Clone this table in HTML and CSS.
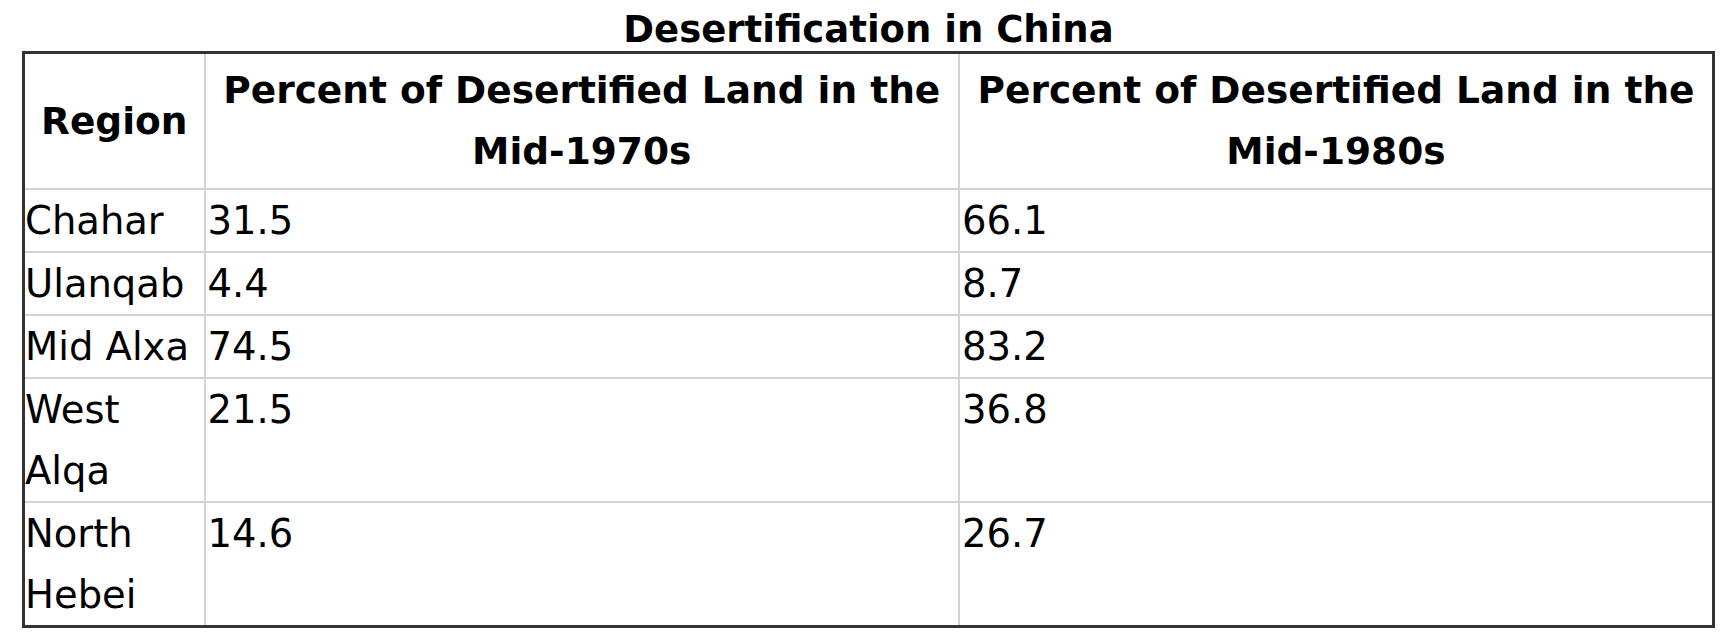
FILE: index.html
```html
<!DOCTYPE html>
<html lang="en">
<head>
<meta charset="utf-8">
<title>Desertification in China</title>
<link rel="stylesheet" href="styles.css">
</head>
<body>
<table class="data-table">
  <caption class="data-caption">Desertification in China</caption>
  <colgroup>
    <col class="col-region">
    <col class="col-value">
    <col class="col-value">
  </colgroup>
  <thead>
    <tr>
      <th>Region</th>
      <th>Percent of Desertified Land in the Mid-1970s</th>
      <th>Percent of Desertified Land in the Mid-1980s</th>
    </tr>
  </thead>
  <tbody>
    <tr><td>Chahar</td><td>31.5</td><td>66.1</td></tr>
    <tr><td>Ulanqab</td><td>4.4</td><td>8.7</td></tr>
    <tr><td>Mid Alxa</td><td>74.5</td><td>83.2</td></tr>
    <tr><td>West Alqa</td><td>21.5</td><td>36.8</td></tr>
    <tr><td>North Hebei</td><td>14.6</td><td>26.7</td></tr>
  </tbody>
</table>
</body>
</html>
```

FILE: styles.css
```css
html, body {
  background: #ffffff;
}

body {
  margin: 8px;
  color: #000000;
  font-family: "DejaVu Sans", Verdana, sans-serif;
}

.data-table {
  margin-left: 14px;
  width: 1693px;
  border-collapse: collapse;
  border: 3px solid #333333;
  table-layout: fixed;
  font-size: 38.5px;
  line-height: 61px;
}

.data-caption {
  font-weight: bold;
  font-size: 37px;
  line-height: normal;
  text-align: center;
}

.col-region {
  width: 181px;
}

.data-table th,
.data-table td {
  border: 2px solid #d3d3d3;
  padding: 0 2px;
  vertical-align: top;
  text-align: left;
}

.data-table td:first-child {
  padding-left: 0;
}

.data-table th {
  font-size: 37.5px;
  font-weight: bold;
  text-align: center;
  vertical-align: middle;
  padding: 6px 2px;
}
```
